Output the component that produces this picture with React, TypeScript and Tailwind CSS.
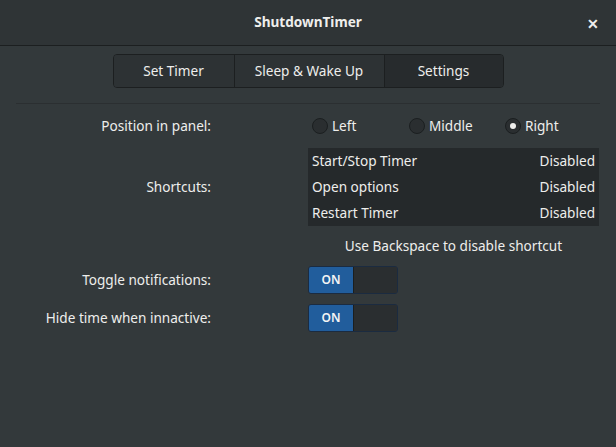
import React from "react";

function Radio({ checked, label }: { checked?: boolean; label: string }) {
  return (
    <div className="flex items-center gap-[4px]">
      <div className="w-[16px] h-[16px] rounded-full border border-[#1b1f20] bg-[#2a2e30] flex items-center justify-center">
        {checked && <div className="w-[6px] h-[6px] rounded-full bg-[#eeeeec]" />}
      </div>
      <span>{label}</span>
    </div>
  );
}

function Switch() {
  return (
    <div className="w-[90px] h-[28px] rounded-[3px] border border-[#1b2b40] flex overflow-hidden">
      <div className="w-[44px] bg-[#215d9c] flex items-center justify-center text-[12px] font-semibold text-[#f4f4f4]">ON</div>
      <div className="flex-1 bg-[#2a2e30] border-l border-[#1b1f20]" />
    </div>
  );
}

export default function App() {
  return (
    <div
      className="w-[616px] h-[447px] bg-[#33393b] text-[#eeeeec] text-[13.6px] flex flex-col"
      style={{ fontFamily: '"Noto Sans", sans-serif' }}
    >
      <div className="h-[46px] bg-[#2f3436] border-b border-[#1c1f20] flex items-center relative shrink-0">
        <div className="flex-1 text-center font-bold">ShutdownTimer</div>
        <div className="absolute right-[17px] top-[13px] text-[14px] font-bold">✕</div>
      </div>
      <div className="flex justify-center pt-[8px]">
        <div className="flex h-[34px] border border-[#1c1f20] rounded-[4px] overflow-hidden">
          <div className="w-[120px] bg-[#2d3234] flex items-center justify-center">Set Timer</div>
          <div className="w-[150px] bg-[#2d3234] border-l border-[#1c1f20] flex items-center justify-center">Sleep &amp; Wake Up</div>
          <div className="w-[119px] bg-[#272b2d] border-l border-[#1c1f20] flex items-center justify-center">Settings</div>
        </div>
      </div>
      <div className="mx-[16px] mt-[15px] h-px bg-[#2b2f31]" />
      <div className="grid grid-cols-[212px_291px] gap-x-[96px] pt-[10px]">
        <div className="h-[24px] flex items-center justify-end pr-[1px]">Position in panel:</div>
        <div className="h-[24px] flex items-center pl-[4px]">
          <div className="w-[97px]"><Radio label="Left" /></div>
          <div className="w-[96px]"><Radio label="Middle" /></div>
          <Radio checked label="Right" />
        </div>
        <div className="flex items-center justify-end mt-[10px] pr-[1px]">Shortcuts:</div>
        <div className="bg-[#25292b] mt-[10px] flex flex-col">
          <div className="h-[26px] flex items-center justify-between px-[4px]"><span>Start/Stop Timer</span><span>Disabled</span></div>
          <div className="h-[26px] flex items-center justify-between px-[4px]"><span>Open options</span><span>Disabled</span></div>
          <div className="h-[26px] flex items-center justify-between px-[4px]"><span>Restart Timer</span><span>Disabled</span></div>
        </div>
        <div />
        <div className="h-[40px] flex items-center justify-center">Use Backspace to disable shortcut</div>
        <div className="h-[28px] flex items-center justify-end pr-[1px]">Toggle notifications:</div>
        <div><Switch /></div>
        <div className="h-[28px] flex items-center justify-end mt-[10px] pr-[1px]">Hide time when innactive:</div>
        <div className="mt-[10px]"><Switch /></div>
      </div>
    </div>
  );
}
